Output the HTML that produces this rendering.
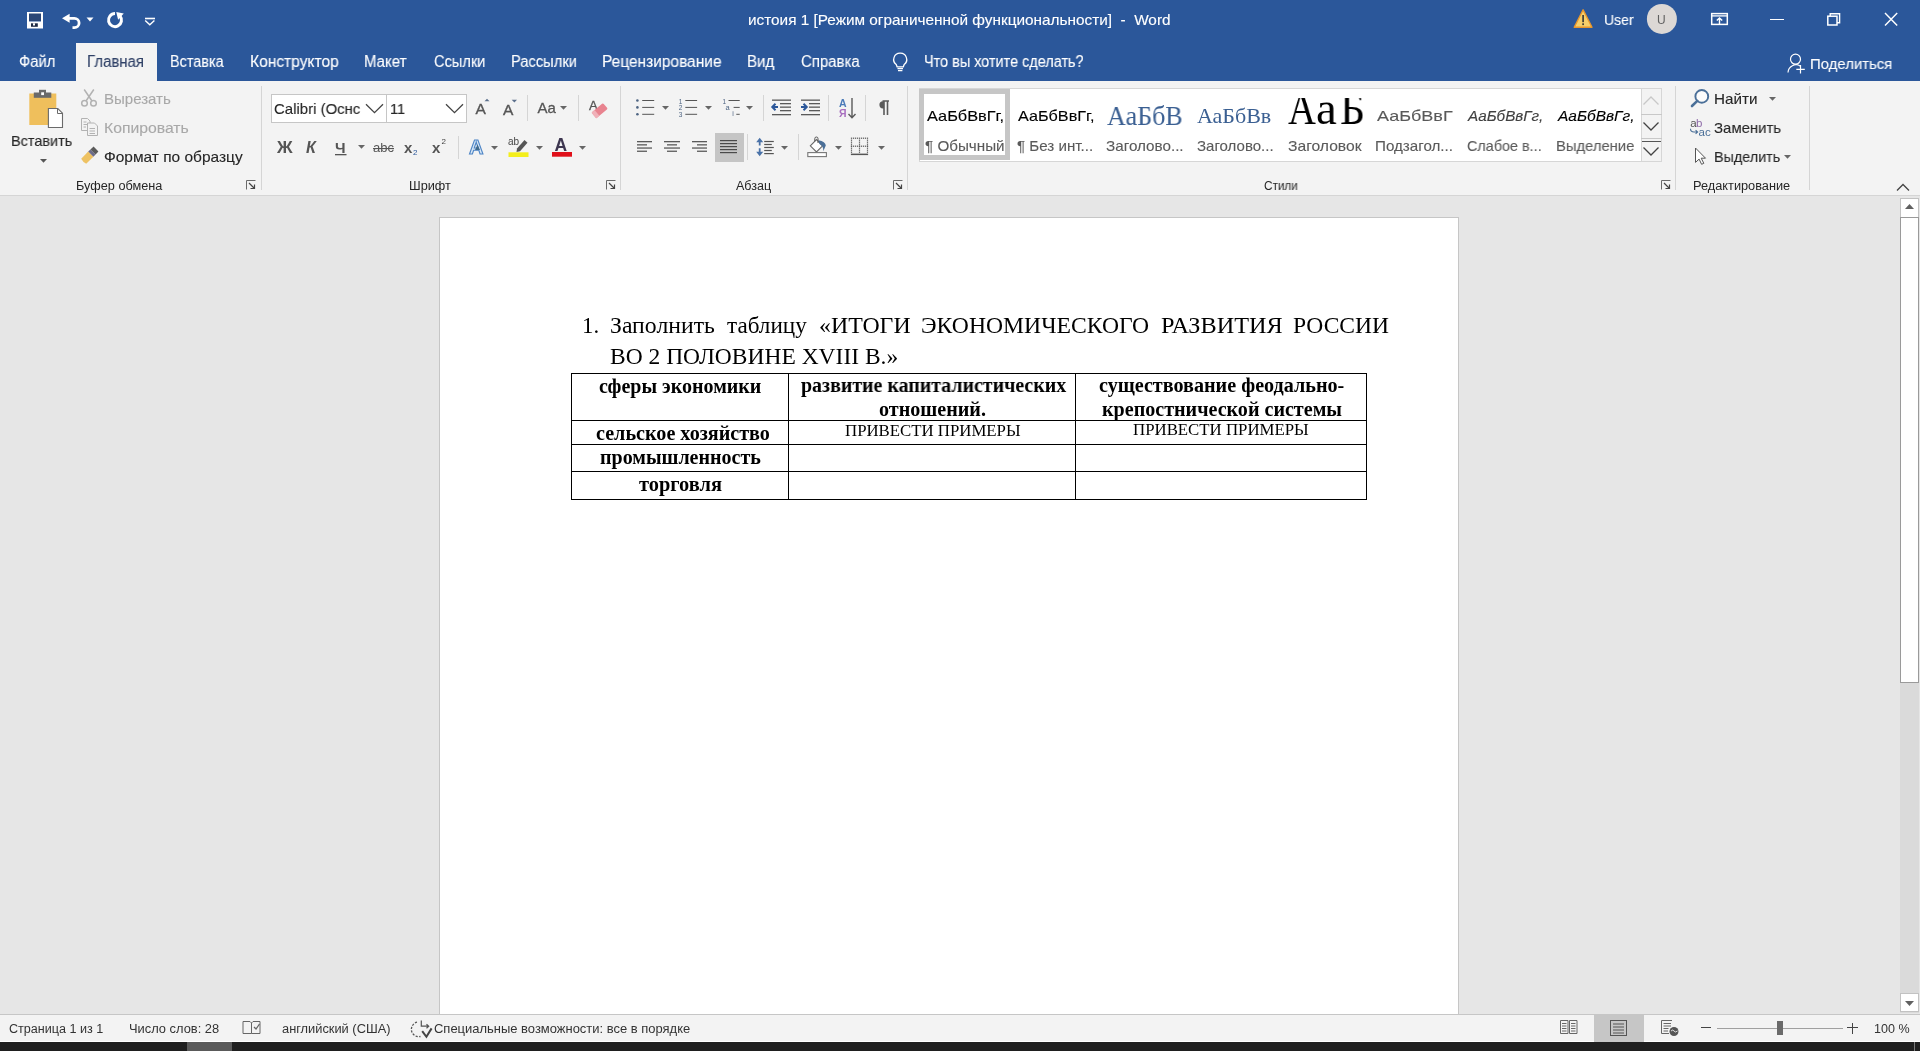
<!DOCTYPE html>
<html><head><meta charset="utf-8"><title>Word</title>
<style>
html,body{margin:0;padding:0}
body{width:1920px;height:1051px;overflow:hidden;position:relative;background:#e6e6e6;font-family:"Liberation Sans",sans-serif}
body>div,body>svg,body>span{position:absolute;display:block}
body>span{line-height:1;white-space:pre;transform-origin:0 0;will-change:transform}
body>svg{will-change:transform;overflow:visible}
</style></head><body><div style="left:0px;top:0px;width:1920px;height:81px;background:#2b579a;"></div><div style="left:76px;top:43px;width:81px;height:38px;background:#f3f3f3;"></div><div style="left:0px;top:81px;width:1920px;height:114px;background:#f3f3f3;"></div><div style="left:0px;top:195px;width:1920px;height:1px;background:#d5d5d5;"></div><div style="left:0px;top:196px;width:1920px;height:818px;background:#e6e6e6;"></div><div style="left:439px;top:217px;width:1020px;height:797px;background:#ffffff;box-sizing:border-box;border:1px solid #c6c6c6;border-bottom:none"></div><div style="left:1900px;top:198px;width:19px;height:815px;background:#dadada;"></div><div style="left:1900px;top:198px;width:19px;height:20px;background:#ffffff;box-sizing:border-box;border:1px solid #c2c2c2"></div><div style="left:1900px;top:217px;width:19px;height:466px;background:#ffffff;box-sizing:border-box;border:1px solid #9a9a9a"></div><div style="left:1900px;top:993px;width:19px;height:19px;background:#ffffff;box-sizing:border-box;border:1px solid #c2c2c2"></div><svg style="left:1904px;top:203px;" width="11" height="7" viewBox="0 0 11 7"><path d="M1 6 L5.5 1 L10 6 Z" fill="#606060"/></svg><svg style="left:1904px;top:1000px;" width="11" height="7" viewBox="0 0 11 7"><path d="M1 1 L5.5 6 L10 1 Z" fill="#606060"/></svg><div style="left:0px;top:1014px;width:1920px;height:1px;background:#c6c6c6;"></div><div style="left:0px;top:1015px;width:1920px;height:27px;background:#f3f3f3;"></div><div style="left:0px;top:1041px;width:1920px;height:1px;background:#ffffff;"></div><div style="left:0px;top:1042px;width:1920px;height:9px;background:#1f1f1f;"></div><div style="left:187px;top:1042px;width:45px;height:9px;background:#5a5a5a;"></div><div style="left:1914px;top:1042px;width:1px;height:9px;background:#7a7a7a;"></div><div style="left:571px;top:373px;width:796px;height:1px;background:#000;height:1.3px"></div><div style="left:571px;top:420px;width:796px;height:1px;background:#000;height:1.3px"></div><div style="left:571px;top:444px;width:796px;height:1px;background:#000;height:1.3px"></div><div style="left:571px;top:471px;width:796px;height:1px;background:#000;height:1.3px"></div><div style="left:571px;top:499px;width:796px;height:1px;background:#000;height:1.3px"></div><div style="left:571px;top:373px;width:1px;height:127px;background:#000;width:1.3px"></div><div style="left:788px;top:373px;width:1px;height:127px;background:#000;width:1.3px"></div><div style="left:1075px;top:373px;width:1px;height:127px;background:#000;width:1.3px"></div><div style="left:1366px;top:373px;width:1px;height:127px;background:#000;width:1.3px"></div><svg style="left:27px;top:12px" width="16" height="16" viewBox="0 0 16 16"><rect x="1" y="1" width="14" height="14.5" fill="none" stroke="#fff" stroke-width="2"/><rect x="2" y="1.5" width="12" height="7.5" fill="#2a4676"/><rect x="1" y="9.5" width="14" height="6" fill="#fff"/><rect x="4" y="11.3" width="6.8" height="3.5" fill="#1e2a44"/><rect x="6" y="11.3" width="2" height="2.2" fill="#fff"/></svg><svg style="left:61px;top:13px" width="21" height="18" viewBox="0 0 21 18"><path d="M1 5.3 L8.6 0.8 L8.6 9.8 Z" fill="#fff"/><path d="M7 5.3 H13.4 A4.7 4.7 0 0 1 13.4 14.7 H11.5" fill="none" stroke="#fff" stroke-width="2.8"/></svg><svg style="left:86px;top:17px" width="8" height="5" viewBox="0 0 8 5"><path d="M0.5 0.5 H7.5 L4 4.5 Z" fill="#fff"/></svg><svg style="left:106px;top:11px" width="19" height="19" viewBox="0 0 19 19"><path d="M9 2.6 A6.5 6.5 0 1 0 13.98 4.92" fill="none" stroke="#fff" stroke-width="3"/><path d="M10.25 0.9 L17.75 2.5 L12.1 8.75 Z" fill="#fff"/></svg><svg style="left:144px;top:16px" width="12" height="10" viewBox="0 0 12 10"><path d="M1 2.5 H11" stroke="#fff" stroke-width="1.6"/><path d="M1.2 4.5 L5.8 8.8 L10.4 4.5" fill="none" stroke="#fff" stroke-width="1.4"/></svg><svg style="left:1573px;top:8px" width="21" height="21" viewBox="0 0 21 21"><path d="M10.1 1.8 L19 19.2 H1.2 Z" fill="#f7cf6a" stroke="#e8962c" stroke-width="1.4" stroke-linejoin="round"/><rect x="9.3" y="7" width="1.6" height="7.2" fill="#333"/><rect x="9.3" y="15.3" width="1.6" height="1.8" fill="#333"/></svg><svg style="left:1646px;top:3px" width="32" height="32" viewBox="0 0 32 32"><circle cx="15.9" cy="15.9" r="15" fill="#dcd8d5"/></svg><svg style="left:1710px;top:12px" width="19" height="14" viewBox="0 0 19 14"><rect x="1.7" y="1.6" width="15.6" height="10.8" fill="none" stroke="#fff" stroke-width="1.5"/><path d="M1.5 3.9 H17.5" stroke="#fff" stroke-width="1.3"/><path d="M9.5 12 V6 M6.8 8.6 L9.5 5.9 L12.2 8.6" fill="none" stroke="#fff" stroke-width="1.4"/></svg><div style="left:1770px;top:18.6px;width:14px;height:1.6px;background:#fff;"></div><svg style="left:1826px;top:12px" width="16" height="14" viewBox="0 0 16 14"><rect x="1.8" y="4.2" width="9.2" height="8.8" fill="none" stroke="#fff" stroke-width="1.5"/><path d="M4.2 4.2 V1.7 H13.6 V10.8 H11" fill="none" stroke="#fff" stroke-width="1.4"/></svg><svg style="left:1883px;top:12px" width="16" height="15" viewBox="0 0 16 15"><path d="M2 1 L14.2 13.5 M14.2 1 L2 13.5" stroke="#fff" stroke-width="1.45"/></svg><svg style="left:1787px;top:53px" width="20" height="21" viewBox="0 0 20 21"><circle cx="8.5" cy="6.2" r="5" fill="none" stroke="#fff" stroke-width="1.2"/><path d="M1 19.5 A8 8 0 0 1 13.5 13.2" fill="none" stroke="#fff" stroke-width="1.2"/><path d="M13.5 12 V20.5 M9.3 16.3 H17.8" stroke="#fff" stroke-width="1.2"/></svg><svg style="left:892px;top:52px" width="17" height="21" viewBox="0 0 17 21"><path d="M8.2 1.2 A6.3 6.3 0 0 1 12.2 12.5 L11.3 14.8 H5.1 L4.2 12.5 A6.3 6.3 0 0 1 8.2 1.2 Z" fill="none" stroke="#fff" stroke-width="1.3"/><path d="M5.5 16.6 H11 M6 18.7 H10.4" stroke="#fff" stroke-width="1.3"/></svg><svg style="left:28px;top:89px" width="36" height="40" viewBox="0 0 36 40"><rect x="1.3" y="4.5" width="27" height="31.5" fill="#efbf5c"/><rect x="5.8" y="3.5" width="17.5" height="5.3" fill="#6a6a6a"/><rect x="11" y="0.8" width="7" height="4" fill="#6a6a6a"/><rect x="13.2" y="3.3" width="2.8" height="2.8" fill="#fff"/><path d="M20.4 19.5 H29.8 L34.5 24.2 V38.5 H20.4 Z" fill="#fff" stroke="#6a6a6a" stroke-width="1.1"/><path d="M29.5 19.5 V24.5 H34.5" fill="none" stroke="#6a6a6a" stroke-width="1"/></svg><svg style="left:40px;top:159px" width="7" height="4" viewBox="0 0 7 4"><path d="M0 0 H7 L3.5 3.8 Z" fill="#555"/></svg><svg style="left:80px;top:88px" width="18" height="20" viewBox="0 0 18 20"><g fill="none" stroke="#b2b2b2" stroke-width="1.5"><circle cx="4.5" cy="15.3" r="2.8"/><circle cx="13.5" cy="15.3" r="2.8"/><path d="M6 13 L13.8 1.5 M12 13 L4.2 1.5"/></g></svg><svg style="left:80px;top:117px" width="19" height="20" viewBox="0 0 19 20"><g fill="#f3f3f3" stroke="#b2b2b2" stroke-width="1"><path d="M1.5 1.5 H7.5 L10 4 V13.5 H1.5 Z"/><path d="M7.5 6 H14.5 L17.5 9 V18.5 H7.5 Z"/><path d="M3.5 5 H6.5 M3.5 7.5 H8 M3.5 10 H6 M9.5 11.5 H15 M9.5 14 H15 M9.5 16.5 H15"/></g></svg><svg style="left:80px;top:146px" width="20" height="19" viewBox="0 0 20 19"><path d="M1.2 12.8 L8.2 5.6 L13.4 10.8 L6.2 17.8 Q3.5 17 1.2 12.8 Z" fill="#eec263"/><path d="M8.2 5.6 L10.4 3.4 L15.6 8.6 L13.4 10.8 Z" fill="#6c6c8a"/><path d="M10.4 3.4 L13.6 0.6 L18.4 5.4 L15.6 8.6 Z" fill="#5a5a5a"/></svg><svg style="left:246px;top:180px" width="10" height="10" viewBox="0 0 10 10"><path d="M0.5 9.5 V0.5 H9.5" fill="none" stroke="#6a6a6a" stroke-width="1"/><path d="M3 3 L8.5 8.5 M4.5 8.5 H8.5 V4.5" fill="none" stroke="#444" stroke-width="1.2"/></svg><div style="left:261px;top:86px;width:1px;height:104px;background:#d5d5d5;"></div><div style="left:271px;top:94px;width:116px;height:29px;background:#fff;box-sizing:border-box;border:1px solid #c6c6c6"></div><div style="left:386px;top:94px;width:81px;height:29px;background:#fff;box-sizing:border-box;border:1px solid #c6c6c6"></div><svg style="left:365px;top:103px" width="19" height="11" viewBox="0 0 19 11"><path d="M1 1.2 L9.5 9.7 L18 1.2" fill="none" stroke="#444" stroke-width="1.3"/></svg><svg style="left:445px;top:103px" width="19" height="11" viewBox="0 0 19 11"><path d="M1 1.2 L9.5 9.7 L18 1.2" fill="none" stroke="#444" stroke-width="1.3"/></svg><svg style="left:475px;top:98px" width="17" height="17" viewBox="0 0 17 17"><text x="0.5" y="15.8" font-family="Liberation Sans" font-size="15.5" fill="#555" stroke="#555" stroke-width="0.35">A</text><path d="M9.5 3.2 L12 0.8 L14.5 3.2 Z" fill="#5b6f8c"/></svg><svg style="left:502px;top:98px" width="17" height="18" viewBox="0 0 17 18"><text x="1" y="17" font-family="Liberation Sans" font-size="15.5" fill="#555" stroke="#555" stroke-width="0.35">A</text><path d="M9.7 1.8 H15 L12.35 4.5 Z" fill="#5b6f8c"/></svg><div style="left:527px;top:95px;width:1px;height:26px;background:#d5d5d5;"></div><svg style="left:537px;top:100px" width="24" height="15" viewBox="0 0 24 15"><text x="0.5" y="13.2" font-family="Liberation Sans" font-size="15" fill="#555" stroke="#555" stroke-width="0.3">Aa</text></svg><svg style="left:560px;top:106px" width="7" height="4" viewBox="0 0 7 4"><path d="M0 0 H7 L3.5 3.8 Z" fill="#666"/></svg><div style="left:578px;top:95px;width:1px;height:26px;background:#d5d5d5;"></div><svg style="left:588px;top:97px" width="21" height="23" viewBox="0 0 21 23"><text x="1" y="12.5" font-family="Liberation Sans" font-size="13" fill="#555" stroke="#555" stroke-width="0.3">A</text><g transform="rotate(-40 11.5 13.5)"><rect x="4" y="10" width="15" height="7.5" rx="1.2" fill="#e8838f"/><rect x="4" y="10" width="4" height="7.5" fill="#f0b0b8"/></g></svg><svg style="left:275px;top:139px" width="20" height="16" viewBox="0 0 20 16"><text x="1" y="14" font-family="Liberation Sans" font-weight="bold" font-size="16" fill="#555" transform="translate(1 0) scale(1.08 1)">Ж</text></svg><svg style="left:305px;top:139px" width="16" height="16" viewBox="0 0 16 16"><text x="1" y="14" font-family="Liberation Sans" font-weight="bold" font-style="italic" font-size="16" fill="#555">К</text></svg><svg style="left:334px;top:139px" width="15" height="17" viewBox="0 0 15 17"><text x="1" y="13.5" font-family="Liberation Sans" font-weight="bold" font-size="15" fill="#555">Ч</text><rect x="1" y="15" width="11.5" height="1.3" fill="#555"/></svg><svg style="left:358px;top:145px" width="7" height="4" viewBox="0 0 7 4"><path d="M0 0 H7 L3.5 3.8 Z" fill="#666"/></svg><svg style="left:372px;top:139px" width="24" height="16" viewBox="0 0 24 16"><text x="1" y="13" font-family="Liberation Sans" font-size="13" fill="#555">abc</text><rect x="1" y="9" width="21" height="1.1" fill="#555"/></svg><svg style="left:403px;top:139px" width="18" height="17" viewBox="0 0 18 17"><text x="1" y="13.5" font-family="Liberation Sans" font-weight="bold" font-size="15" fill="#555">x</text><text x="10" y="16" font-family="Liberation Sans" font-size="8" fill="#2b579a">2</text></svg><svg style="left:431px;top:136px" width="18" height="18" viewBox="0 0 18 18"><text x="1" y="16.5" font-family="Liberation Sans" font-weight="bold" font-size="15" fill="#555">x</text><text x="10.5" y="8" font-family="Liberation Sans" font-size="8" fill="#444">2</text></svg><div style="left:458px;top:136px;width:1px;height:23px;background:#d5d5d5;"></div><svg style="left:468px;top:137px" width="19" height="19" viewBox="0 0 19 19"><text x="1" y="17.2" font-family="Liberation Sans" font-weight="bold" font-size="20" fill="#d9e8f6" stroke="#4f86c6" stroke-width="1.1">A</text><path d="M9.5 7.5 L12 13 H7 Z" fill="#3f6b8f"/></svg><svg style="left:491px;top:146px" width="7" height="4" viewBox="0 0 7 4"><path d="M0 0 H7 L3.5 3.8 Z" fill="#666"/></svg><svg style="left:507px;top:135px" width="24" height="23" viewBox="0 0 24 23"><text x="1" y="10" font-family="Liberation Sans" font-size="10" fill="#444">ab</text><path d="M10 13.5 L17.5 5 L20.5 7.7 L13 16.3 L9.5 17 Z" fill="#555"/><rect x="1.5" y="17.3" width="20" height="4.7" fill="#f3ee1c"/></svg><svg style="left:536px;top:146px" width="7" height="4" viewBox="0 0 7 4"><path d="M0 0 H7 L3.5 3.8 Z" fill="#666"/></svg><svg style="left:551px;top:136px" width="23" height="22" viewBox="0 0 23 22"><text x="3.5" y="15" font-family="Liberation Sans" font-weight="bold" font-size="17.5" fill="#3d3650">A</text><rect x="1" y="16" width="20" height="4.7" fill="#e0101a"/></svg><svg style="left:579px;top:146px" width="7" height="4" viewBox="0 0 7 4"><path d="M0 0 H7 L3.5 3.8 Z" fill="#666"/></svg><svg style="left:606px;top:180px" width="10" height="10" viewBox="0 0 10 10"><path d="M0.5 9.5 V0.5 H9.5" fill="none" stroke="#6a6a6a" stroke-width="1"/><path d="M3 3 L8.5 8.5 M4.5 8.5 H8.5 V4.5" fill="none" stroke="#444" stroke-width="1.2"/></svg><div style="left:620px;top:86px;width:1px;height:104px;background:#d5d5d5;"></div><svg style="left:635px;top:98px" width="21" height="19" viewBox="0 0 21 19"><g fill="#4e6482"><circle cx="2.4" cy="2.5" r="1.3"/><circle cx="2.4" cy="9.4" r="1.3"/><circle cx="2.4" cy="16.3" r="1.3"/></g><g fill="#555"><rect x="7.2" y="2" width="12" height="1"/><rect x="7.2" y="8.9" width="12" height="1"/><rect x="7.2" y="15.8" width="12" height="1"/></g></svg><svg style="left:662px;top:106px" width="7" height="4" viewBox="0 0 7 4"><path d="M0 0 H7 L3.5 3.8 Z" fill="#666"/></svg><svg style="left:678px;top:98px" width="21" height="19" viewBox="0 0 21 19"><g font-family="Liberation Sans" font-size="6.5" fill="#4e6482"><text x="0.8" y="5.6">1</text><text x="0.8" y="12.4">2</text><text x="0.8" y="19.2">3</text></g><g fill="#555"><rect x="7.3" y="2" width="11.8" height="1"/><rect x="7.3" y="8.9" width="11.8" height="1"/><rect x="7.3" y="15.8" width="11.8" height="1"/></g></svg><svg style="left:705px;top:106px" width="7" height="4" viewBox="0 0 7 4"><path d="M0 0 H7 L3.5 3.8 Z" fill="#666"/></svg><svg style="left:720px;top:98px" width="22" height="19" viewBox="0 0 22 19"><g font-family="Liberation Sans" fill="#4e6482"><text x="2.6" y="5.6" font-size="6.5">1</text><text x="5.6" y="12" font-size="7.5">a</text><text x="12.2" y="17.8" font-size="7">i</text></g><g fill="#555"><rect x="8.5" y="2" width="11.2" height="1"/><rect x="13.6" y="8.9" width="6.1" height="1"/><rect x="16.3" y="15.8" width="3.4" height="1"/></g></svg><svg style="left:746px;top:106px" width="7" height="4" viewBox="0 0 7 4"><path d="M0 0 H7 L3.5 3.8 Z" fill="#666"/></svg><div style="left:763px;top:95px;width:1px;height:26px;background:#d5d5d5;"></div><svg style="left:771px;top:99px" width="21" height="18" viewBox="0 0 21 18"><g fill="#5a5a5a"><rect x="1" y="0.5" width="19" height="1.3"/><rect x="9" y="4" width="11" height="1.3"/><rect x="9" y="7.5" width="11" height="1.3"/><rect x="9" y="11" width="11" height="1.3"/><rect x="1" y="15" width="19" height="1.3"/></g><path d="M7 8 H1.5 M4.5 4.8 L1.3 8 L4.5 11.2" fill="none" stroke="#2b579a" stroke-width="2"/></svg><svg style="left:800px;top:99px" width="21" height="18" viewBox="0 0 21 18"><g fill="#5a5a5a"><rect x="1" y="0.5" width="19" height="1.3"/><rect x="9" y="4" width="11" height="1.3"/><rect x="9" y="7.5" width="11" height="1.3"/><rect x="9" y="11" width="11" height="1.3"/><rect x="1" y="15" width="19" height="1.3"/></g><path d="M1 8 H6.5 M3.5 4.8 L6.7 8 L3.5 11.2" fill="none" stroke="#2b579a" stroke-width="2"/></svg><div style="left:828px;top:95px;width:1px;height:26px;background:#d5d5d5;"></div><svg style="left:839px;top:97px" width="19" height="22" viewBox="0 0 19 22"><text x="0" y="9.5" font-family="Liberation Sans" font-weight="bold" font-size="10.5" fill="#4a7ab8">A</text><text x="0" y="20" font-family="Liberation Sans" font-weight="bold" font-size="10.5" fill="#a86fbf">Я</text><path d="M13 1 V20.5 M9.5 17 L13 20.7 L16.5 17" fill="none" stroke="#5a5a5a" stroke-width="1.4"/></svg><div style="left:865px;top:95px;width:1px;height:26px;background:#d5d5d5;"></div><svg style="left:876px;top:100px" width="15" height="16" viewBox="0 0 15 16"><path d="M6.5 1 H13 M8 1 V15 M11.5 1 V15" stroke="#5a5a5a" stroke-width="1.6" fill="none"/><path d="M7 1.2 A3.6 3.6 0 0 0 7 8.4 H8 V1.2 Z" fill="#5a5a5a"/></svg><svg style="left:637px;top:141px" width="17" height="12" viewBox="0 0 17 12"><rect x="0" y="0.0" width="15" height="1.3" fill="#5a5a5a"/><rect x="0" y="3.2" width="10" height="1.3" fill="#5a5a5a"/><rect x="0" y="6.4" width="15" height="1.3" fill="#5a5a5a"/><rect x="0" y="9.600000000000001" width="10" height="1.3" fill="#5a5a5a"/></svg><svg style="left:664px;top:141px" width="17" height="12" viewBox="0 0 17 12"><rect x="0" y="0.0" width="16" height="1.3" fill="#5a5a5a"/><rect x="3" y="3.2" width="10" height="1.3" fill="#5a5a5a"/><rect x="0" y="6.4" width="16" height="1.3" fill="#5a5a5a"/><rect x="3" y="9.600000000000001" width="10" height="1.3" fill="#5a5a5a"/></svg><svg style="left:692px;top:141px" width="17" height="12" viewBox="0 0 17 12"><rect x="0" y="0.0" width="15" height="1.3" fill="#5a5a5a"/><rect x="5" y="3.2" width="10" height="1.3" fill="#5a5a5a"/><rect x="0" y="6.4" width="15" height="1.3" fill="#5a5a5a"/><rect x="5" y="9.600000000000001" width="10" height="1.3" fill="#5a5a5a"/></svg><div style="left:715px;top:133px;width:29px;height:29px;background:#c5c5c5;"></div><svg style="left:720px;top:140px" width="18" height="14" viewBox="0 0 18 14"><rect x="0" y="0.0" width="17" height="1.2" fill="#4a4a4a"/><rect x="0" y="3.0" width="17" height="1.2" fill="#4a4a4a"/><rect x="0" y="6.0" width="17" height="1.2" fill="#4a4a4a"/><rect x="0" y="9.0" width="17" height="1.2" fill="#4a4a4a"/><rect x="0" y="12.0" width="17" height="1.2" fill="#4a4a4a"/></svg><div style="left:747px;top:134px;width:1px;height:26px;background:#d5d5d5;"></div><svg style="left:755px;top:137px" width="21" height="20" viewBox="0 0 21 20"><path d="M4.7 3 V8.6 M4.7 11.2 V17" stroke="#4a72a8" stroke-width="1.8"/><path d="M1.2 5.3 L4.7 0.8 L8.2 5.3 Z M1.2 14.7 L4.7 19.2 L8.2 14.7 Z" fill="#4a72a8"/><g fill="#555"><rect x="9.2" y="3.9" width="9.6" height="1.2"/><rect x="9.2" y="6.9" width="7.6" height="1.2"/><rect x="9.2" y="9.9" width="9.6" height="1.2"/><rect x="9.2" y="12.9" width="7.6" height="1.2"/><rect x="9.2" y="16" width="9.6" height="1.2"/></g></svg><svg style="left:781px;top:146px" width="7" height="4" viewBox="0 0 7 4"><path d="M0 0 H7 L3.5 3.8 Z" fill="#666"/></svg><div style="left:798px;top:134px;width:1px;height:26px;background:#d5d5d5;"></div><svg style="left:806px;top:136px" width="22" height="21" viewBox="0 0 22 21"><path d="M4.3 9.8 L10.5 3.6 L16.6 9.8 L10.5 16 Z" fill="#fff" stroke="#666" stroke-width="1.1"/><path d="M8.8 5.3 V2.6 A1.6 1.6 0 0 1 12 2.6 V7" fill="none" stroke="#555" stroke-width="1"/><path d="M12.5 4.2 Q19.5 5.5 19.8 9.5 L17.3 15.2 Q17.6 10 13.5 8 Z" fill="#4a6f98"/><rect x="1.8" y="16.6" width="18.6" height="4" fill="#fff" stroke="#777" stroke-width="1.1"/></svg><svg style="left:835px;top:146px" width="7" height="4" viewBox="0 0 7 4"><path d="M0 0 H7 L3.5 3.8 Z" fill="#666"/></svg><svg style="left:850px;top:137px" width="19" height="19" viewBox="0 0 19 19"><g fill="#555"><rect x="0.9" y="0.6" width="1.2" height="1.2"/><rect x="0.9" y="8.6" width="1.2" height="1.2"/><rect x="2.9" y="0.6" width="1.2" height="1.2"/><rect x="2.9" y="8.6" width="1.2" height="1.2"/><rect x="4.9" y="0.6" width="1.2" height="1.2"/><rect x="4.9" y="8.6" width="1.2" height="1.2"/><rect x="6.9" y="0.6" width="1.2" height="1.2"/><rect x="6.9" y="8.6" width="1.2" height="1.2"/><rect x="8.9" y="0.6" width="1.2" height="1.2"/><rect x="8.9" y="8.6" width="1.2" height="1.2"/><rect x="10.9" y="0.6" width="1.2" height="1.2"/><rect x="10.9" y="8.6" width="1.2" height="1.2"/><rect x="12.9" y="0.6" width="1.2" height="1.2"/><rect x="12.9" y="8.6" width="1.2" height="1.2"/><rect x="14.9" y="0.6" width="1.2" height="1.2"/><rect x="14.9" y="8.6" width="1.2" height="1.2"/><rect x="16.9" y="0.6" width="1.2" height="1.2"/><rect x="16.9" y="8.6" width="1.2" height="1.2"/><rect x="0.9" y="2.6" width="1.2" height="1.2"/><rect x="8.9" y="2.6" width="1.2" height="1.2"/><rect x="16.9" y="2.6" width="1.2" height="1.2"/><rect x="0.9" y="4.6" width="1.2" height="1.2"/><rect x="8.9" y="4.6" width="1.2" height="1.2"/><rect x="16.9" y="4.6" width="1.2" height="1.2"/><rect x="0.9" y="6.6" width="1.2" height="1.2"/><rect x="8.9" y="6.6" width="1.2" height="1.2"/><rect x="16.9" y="6.6" width="1.2" height="1.2"/><rect x="0.9" y="8.6" width="1.2" height="1.2"/><rect x="8.9" y="8.6" width="1.2" height="1.2"/><rect x="16.9" y="8.6" width="1.2" height="1.2"/><rect x="0.9" y="10.6" width="1.2" height="1.2"/><rect x="8.9" y="10.6" width="1.2" height="1.2"/><rect x="16.9" y="10.6" width="1.2" height="1.2"/><rect x="0.9" y="12.6" width="1.2" height="1.2"/><rect x="8.9" y="12.6" width="1.2" height="1.2"/><rect x="16.9" y="12.6" width="1.2" height="1.2"/><rect x="0.9" y="14.6" width="1.2" height="1.2"/><rect x="8.9" y="14.6" width="1.2" height="1.2"/><rect x="16.9" y="14.6" width="1.2" height="1.2"/></g><rect x="0.9" y="16.6" width="17.2" height="1.5" fill="#555"/></svg><svg style="left:878px;top:146px" width="7" height="4" viewBox="0 0 7 4"><path d="M0 0 H7 L3.5 3.8 Z" fill="#666"/></svg><svg style="left:893px;top:180px" width="10" height="10" viewBox="0 0 10 10"><path d="M0.5 9.5 V0.5 H9.5" fill="none" stroke="#6a6a6a" stroke-width="1"/><path d="M3 3 L8.5 8.5 M4.5 8.5 H8.5 V4.5" fill="none" stroke="#444" stroke-width="1.2"/></svg><div style="left:907px;top:86px;width:1px;height:104px;background:#d5d5d5;"></div><div style="left:919px;top:88px;width:743px;height:74px;background:#fff;box-sizing:border-box;border:1px solid #d6d6d6"></div><div style="left:919px;top:89px;width:91px;height:71px;background:transparent;box-sizing:border-box;border:5px solid #c6c6c6"></div><div style="left:1641px;top:88px;width:21px;height:74px;background:#f3f3f3;box-sizing:border-box;border:1px solid #d6d6d6"></div><div style="left:1641px;top:113.5px;width:21px;height:1.5px;background:#c8c8c8;"></div><div style="left:1641px;top:137.5px;width:21px;height:1.5px;background:#c8c8c8;"></div><div style="left:1642px;top:140.5px;width:19px;height:1.6px;background:#555;"></div><svg style="left:1642px;top:95px" width="18" height="11" viewBox="0 0 18 11"><path d="M1.5 9.5 L9 2 L16.5 9.5" fill="none" stroke="#c8c8c8" stroke-width="1.3"/></svg><svg style="left:1642px;top:121px" width="18" height="11" viewBox="0 0 18 11"><path d="M1.5 1.5 L9 9 L16.5 1.5" fill="none" stroke="#444" stroke-width="1.3"/></svg><svg style="left:1642px;top:146px" width="18" height="11" viewBox="0 0 18 11"><path d="M1.5 1.5 L9 9 L16.5 1.5" fill="none" stroke="#444" stroke-width="1.3"/></svg><svg style="left:1661px;top:180px" width="10" height="10" viewBox="0 0 10 10"><path d="M0.5 9.5 V0.5 H9.5" fill="none" stroke="#6a6a6a" stroke-width="1"/><path d="M3 3 L8.5 8.5 M4.5 8.5 H8.5 V4.5" fill="none" stroke="#444" stroke-width="1.2"/></svg><div style="left:1675px;top:86px;width:1px;height:104px;background:#d5d5d5;"></div><svg style="left:1690px;top:88px" width="20" height="20" viewBox="0 0 20 20"><circle cx="11.8" cy="8.4" r="6.4" fill="#fbfbfb" stroke="#4a6f98" stroke-width="1.9"/><path d="M7.3 12.9 L2 18" stroke="#4a6f98" stroke-width="2.6" stroke-linecap="round"/></svg><svg style="left:1769px;top:97px" width="7" height="4" viewBox="0 0 7 4"><path d="M0 0 H7 L3.5 3.8 Z" fill="#666"/></svg><svg style="left:1689px;top:117px" width="23" height="21" viewBox="0 0 23 21"><text x="1.2" y="9.6" font-family="Liberation Sans" font-size="11.5" fill="#555">a</text><text x="7" y="9.6" font-family="Liberation Sans" font-size="11.5" fill="#8e6aa8">b</text><text x="9.6" y="18.6" font-family="Liberation Sans" font-size="11.5" fill="#4a6f98">ac</text><path d="M1.5 11.8 Q1.5 15 5 15 H8.5 M6.6 13.2 L8.6 15 L6.6 16.8" fill="none" stroke="#4a6f98" stroke-width="1.1"/></svg><svg style="left:1694px;top:147px" width="13" height="19" viewBox="0 0 13 19"><path d="M1.5 1 L11.5 11.2 H7.2 L9.8 16.3 L7.6 17.3 L5.1 12.1 L1.5 15.4 Z" fill="#fff" stroke="#555" stroke-width="1"/></svg><svg style="left:1784px;top:155px" width="7" height="4" viewBox="0 0 7 4"><path d="M0 0 H7 L3.5 3.8 Z" fill="#666"/></svg><div style="left:1809px;top:86px;width:1px;height:104px;background:#d5d5d5;"></div><svg style="left:1896px;top:183px" width="14" height="9" viewBox="0 0 14 9"><path d="M1 7.5 L7 1.5 L13 7.5" fill="none" stroke="#444" stroke-width="1.3"/></svg><svg style="left:242px;top:1020px" width="20" height="15" viewBox="0 0 20 15"><path d="M1 1.5 H8 L9.5 3 V13.5 H1 Z M9.5 3 L11 1.5 H18 V13.5 H9.5" fill="none" stroke="#666" stroke-width="1"/><path d="M12 7 L14 9 L17.5 4" fill="none" stroke="#666" stroke-width="1.3"/></svg><svg style="left:412px;top:1019px" width="22" height="19" viewBox="0 0 22 19"><path d="M5 3.2 A7 7 0 0 0 8.5 17.5" fill="none" stroke="#555" stroke-width="1.3" stroke-dasharray="2.2 1.4"/><path d="M9.3 1.5 V7.2 H16.5 M14.5 5.2 L16.7 7.2 L14.5 9.2" fill="none" stroke="#555" stroke-width="1.2"/><path d="M10.2 12.2 L14.4 17.8 L19.6 9.4" fill="none" stroke="#444" stroke-width="2"/></svg><svg style="left:1559px;top:1019px" width="20" height="17" viewBox="0 0 20 17"><g fill="none" stroke="#666" stroke-width="1"><path d="M1.5 1.5 H9 V14.5 H1.5 Z M10.5 1.5 H18 V14.5 H10.5 Z"/><path d="M3 4.5 H7.5 M3 7 H7.5 M3 9.5 H7.5 M3 12 H7.5 M12 4.5 H16.5 M12 7 H16.5 M12 9.5 H16.5 M12 12 H16.5"/></g></svg><div style="left:1594px;top:1014px;width:50px;height:28px;background:#c6c6c6;"></div><svg style="left:1609px;top:1019px" width="19" height="18" viewBox="0 0 19 18"><g fill="none" stroke="#555" stroke-width="1"><rect x="1.5" y="1.5" width="16" height="15"/><path d="M4 5 H15 M4 8 H15 M4 11 H15 M4 14 H15"/></g></svg><svg style="left:1660px;top:1019px" width="20" height="18" viewBox="0 0 20 18"><g fill="none" stroke="#666" stroke-width="1"><path d="M12 1.5 H1.5 V14.5 H9"/><path d="M3.5 4.5 H11 M3.5 7 H11 M3.5 9.5 H8.5 M3.5 12 H8"/></g><circle cx="14" cy="12.5" r="4.5" fill="#555"/><path d="M11 12 Q13 10 14 12 T17.5 12" stroke="#fff" stroke-width="0.8" fill="none"/></svg><div style="left:1701px;top:1027px;width:10px;height:1.3px;background:#444;"></div><div style="left:1717px;top:1028px;width:126px;height:1px;background:#a0a0a0;"></div><div style="left:1777px;top:1021px;width:6px;height:14px;background:#6a6a6a;"></div><div style="left:1847px;top:1027px;width:11px;height:1.3px;background:#444;"></div><div style="left:1851.8px;top:1022.5px;width:1.3px;height:11px;background:#444;"></div><span style="left:747.57px;top:12.00px;font-size:15px;font-family:'Liberation Sans', sans-serif;font-weight:400;font-style:normal;color:#ffffff;transform:scaleX(1.0224);-webkit-text-stroke:0.12px #ffffff">истоия 1 [Режим ограниченной функциональности]  -  Word</span><span style="left:1604.06px;top:11.75px;font-size:15px;font-family:'Liberation Sans', sans-serif;font-weight:400;font-style:normal;color:#ffffff;transform:scaleX(0.9355);-webkit-text-stroke:0.12px #ffffff">User</span><span style="left:1657.21px;top:13.61px;font-size:12px;font-family:'Liberation Sans', sans-serif;font-weight:400;font-style:normal;color:#5f5f5f;transform:scaleX(0.9857)">U</span><span style="left:19.22px;top:53.81px;font-size:15.8px;font-family:'Liberation Sans', sans-serif;font-weight:400;font-style:normal;color:#ffffff;transform:scaleX(0.9378);-webkit-text-stroke:0.12px #ffffff">Файл</span><span style="left:87.05px;top:53.81px;font-size:15.8px;font-family:'Liberation Sans', sans-serif;font-weight:400;font-style:normal;color:#2f4066;transform:scaleX(0.9483);-webkit-text-stroke:0.12px #2f4066">Главная</span><span style="left:169.56px;top:53.81px;font-size:15.8px;font-family:'Liberation Sans', sans-serif;font-weight:400;font-style:normal;color:#ffffff;transform:scaleX(0.9123);-webkit-text-stroke:0.12px #ffffff">Вставка</span><span style="left:249.62px;top:53.81px;font-size:15.8px;font-family:'Liberation Sans', sans-serif;font-weight:400;font-style:normal;color:#ffffff;transform:scaleX(0.9852);-webkit-text-stroke:0.12px #ffffff">Конструктор</span><span style="left:364.05px;top:53.81px;font-size:15.8px;font-family:'Liberation Sans', sans-serif;font-weight:400;font-style:normal;color:#ffffff;transform:scaleX(0.9500);-webkit-text-stroke:0.12px #ffffff">Макет</span><span style="left:433.65px;top:53.81px;font-size:15.8px;font-family:'Liberation Sans', sans-serif;font-weight:400;font-style:normal;color:#ffffff;transform:scaleX(0.9222);-webkit-text-stroke:0.12px #ffffff">Ссылки</span><span style="left:511.07px;top:53.81px;font-size:15.8px;font-family:'Liberation Sans', sans-serif;font-weight:400;font-style:normal;color:#ffffff;transform:scaleX(0.9304);-webkit-text-stroke:0.12px #ffffff">Рассылки</span><span style="left:602.44px;top:53.81px;font-size:15.8px;font-family:'Liberation Sans', sans-serif;font-weight:400;font-style:normal;color:#ffffff;transform:scaleX(0.9800);-webkit-text-stroke:0.12px #ffffff">Рецензирование</span><span style="left:747.48px;top:53.81px;font-size:15.8px;font-family:'Liberation Sans', sans-serif;font-weight:400;font-style:normal;color:#ffffff;transform:scaleX(0.9556);-webkit-text-stroke:0.12px #ffffff">Вид</span><span style="left:800.66px;top:53.81px;font-size:15.8px;font-family:'Liberation Sans', sans-serif;font-weight:400;font-style:normal;color:#ffffff;transform:scaleX(0.9459);-webkit-text-stroke:0.12px #ffffff">Справка</span><span style="left:923.51px;top:53.81px;font-size:15.8px;font-family:'Liberation Sans', sans-serif;font-weight:400;font-style:normal;color:#ffffff;transform:scaleX(0.9139);-webkit-text-stroke:0.12px #ffffff">Что вы хотите сделать?</span><span style="left:1809.61px;top:55.80px;font-size:15px;font-family:'Liberation Sans', sans-serif;font-weight:400;font-style:normal;color:#ffffff;transform:scaleX(0.9926);-webkit-text-stroke:0.12px #ffffff">Поделиться</span><span style="left:11.45px;top:133.11px;font-size:15px;font-family:'Liberation Sans', sans-serif;font-weight:400;font-style:normal;color:#262626;transform:scaleX(0.9629);-webkit-text-stroke:0.12px #262626">Вставить</span><span style="left:103.61px;top:90.91px;font-size:15px;font-family:'Liberation Sans', sans-serif;font-weight:400;font-style:normal;color:#a8a8a8;transform:scaleX(0.9954);-webkit-text-stroke:0.12px #a8a8a8">Вырезать</span><span style="left:103.54px;top:119.71px;font-size:15px;font-family:'Liberation Sans', sans-serif;font-weight:400;font-style:normal;color:#a8a8a8;transform:scaleX(1.0494);-webkit-text-stroke:0.12px #a8a8a8">Копировать</span><span style="left:103.56px;top:148.80px;font-size:15px;font-family:'Liberation Sans', sans-serif;font-weight:400;font-style:normal;color:#262626;transform:scaleX(1.0308);-webkit-text-stroke:0.12px #262626">Формат по образцу</span><span style="left:76.18px;top:179.70px;font-size:12px;font-family:'Liberation Sans', sans-serif;font-weight:400;font-style:normal;color:#262626;transform:scaleX(1.0593)">Буфер обмена</span><span style="left:274.00px;top:100.71px;font-size:15px;font-family:'Liberation Sans', sans-serif;font-weight:400;font-style:normal;color:#262626;transform:scaleX(0.9965);-webkit-text-stroke:0.12px #262626">Calibri (Оснс</span><span style="left:390.04px;top:100.71px;font-size:15px;font-family:'Liberation Sans', sans-serif;font-weight:400;font-style:normal;color:#262626;transform:scaleX(0.9643);-webkit-text-stroke:0.12px #262626">11</span><span style="left:408.76px;top:179.50px;font-size:12px;font-family:'Liberation Sans', sans-serif;font-weight:400;font-style:normal;color:#262626;transform:scaleX(1.0615)">Шрифт</span><span style="left:735.61px;top:179.81px;font-size:12px;font-family:'Liberation Sans', sans-serif;font-weight:400;font-style:normal;color:#262626;transform:scaleX(1.0441)">Абзац</span><span style="left:1264.02px;top:179.81px;font-size:12px;font-family:'Liberation Sans', sans-serif;font-weight:400;font-style:normal;color:#262626;transform:scaleX(0.9788)">Стили</span><span style="left:1692.76px;top:180.00px;font-size:12px;font-family:'Liberation Sans', sans-serif;font-weight:400;font-style:normal;color:#262626;transform:scaleX(1.0633)">Редактирование</span><span style="left:926.96px;top:108.11px;font-size:15px;font-family:'Liberation Sans', sans-serif;font-weight:400;font-style:normal;color:#000000;transform:scaleX(1.0884);-webkit-text-stroke:0.12px #000000">АаБбВвГг,</span><span style="left:924.59px;top:137.50px;font-size:15px;font-family:'Liberation Sans', sans-serif;font-weight:400;font-style:normal;color:#5a5a5a;transform:scaleX(1.0130);-webkit-text-stroke:0.12px #5a5a5a">¶ Обычный</span><span style="left:1017.79px;top:108.11px;font-size:15px;font-family:'Liberation Sans', sans-serif;font-weight:400;font-style:normal;color:#000000;transform:scaleX(1.0783);-webkit-text-stroke:0.12px #000000">АаБбВвГг,</span><span style="left:1016.99px;top:137.50px;font-size:15px;font-family:'Liberation Sans', sans-serif;font-weight:400;font-style:normal;color:#5a5a5a;transform:scaleX(1.0082);-webkit-text-stroke:0.12px #5a5a5a">¶ Без инт...</span><span style="left:1107.21px;top:103.00px;font-size:27px;font-family:'Liberation Serif', serif;font-weight:400;font-style:normal;color:#3a5f92;transform:scaleX(0.9662)">АаБбВ</span><span style="left:1105.78px;top:137.50px;font-size:15px;font-family:'Liberation Sans', sans-serif;font-weight:400;font-style:normal;color:#5a5a5a;transform:scaleX(1.0149);-webkit-text-stroke:0.12px #5a5a5a">Заголово...</span><span style="left:1197.40px;top:104.81px;font-size:22px;font-family:'Liberation Serif', serif;font-weight:400;font-style:normal;color:#3a5f92;transform:scaleX(0.9986)">АаБбВв</span><span style="left:1197.00px;top:137.50px;font-size:15px;font-family:'Liberation Sans', sans-serif;font-weight:400;font-style:normal;color:#5a5a5a;transform:scaleX(1.0013);-webkit-text-stroke:0.12px #5a5a5a">Заголово...</span><div style="left:1280px;top:98.3px;width:84px;height:40px;overflow:hidden"><span style="position:absolute;display:block;line-height:1;white-space:pre;transform-origin:0 0;will-change:transform;left:8.00px;top:-13.60px;font-size:47px;font-family:'Liberation Serif', serif;font-weight:400;color:#000000;transform:scaleX(0.8206)">А</span></div><div style="left:1280px;top:98.3px;width:84px;height:40px;overflow:hidden"><span style="position:absolute;display:block;line-height:1;white-space:pre;transform-origin:0 0;will-change:transform;left:36.42px;top:-13.60px;font-size:47px;font-family:'Liberation Serif', serif;font-weight:400;color:#000000;transform:scaleX(0.9895)">а</span></div><div style="left:1280px;top:98.3px;width:83.2px;height:40px;overflow:hidden"><span style="position:absolute;display:block;line-height:1;white-space:pre;transform-origin:0 0;will-change:transform;left:59.91px;top:-13.60px;font-size:47px;font-family:'Liberation Serif', serif;font-weight:400;color:#000000;transform:scaleX(0.9304)">Б</span></div><span style="left:1288.18px;top:137.50px;font-size:15px;font-family:'Liberation Sans', sans-serif;font-weight:400;font-style:normal;color:#5a5a5a;transform:scaleX(1.0429);-webkit-text-stroke:0.12px #5a5a5a">Заголовок</span><span style="left:1377.12px;top:108.11px;font-size:15px;font-family:'Liberation Sans', sans-serif;font-weight:400;font-style:normal;color:#595959;transform:scaleX(1.2000);-webkit-text-stroke:0.12px #595959">АаБбВвГ</span><span style="left:1375.39px;top:137.50px;font-size:15px;font-family:'Liberation Sans', sans-serif;font-weight:400;font-style:normal;color:#5a5a5a;transform:scaleX(1.0107);-webkit-text-stroke:0.12px #5a5a5a">Подзагол...</span><span style="left:1468.40px;top:107.80px;font-size:15px;font-family:'Liberation Sans', sans-serif;font-weight:400;font-style:italic;color:#404040;transform:scaleX(1.0164);-webkit-text-stroke:0.12px #404040">АаБбВвГг,</span><span style="left:1467.43px;top:137.71px;font-size:15px;font-family:'Liberation Sans', sans-serif;font-weight:400;font-style:normal;color:#5a5a5a;transform:scaleX(0.9592);-webkit-text-stroke:0.12px #5a5a5a">Слабое в...</span><span style="left:1558.00px;top:107.80px;font-size:15px;font-family:'Liberation Sans', sans-serif;font-weight:400;font-style:italic;color:#000000;transform:scaleX(1.0319);-webkit-text-stroke:0.12px #000000">АаБбВвГг,</span><span style="left:1555.62px;top:137.71px;font-size:15px;font-family:'Liberation Sans', sans-serif;font-weight:400;font-style:normal;color:#5a5a5a;transform:scaleX(0.9846);-webkit-text-stroke:0.12px #5a5a5a">Выделение</span><span style="left:1713.99px;top:90.91px;font-size:15px;font-family:'Liberation Sans', sans-serif;font-weight:400;font-style:normal;color:#262626;transform:scaleX(1.0146);-webkit-text-stroke:0.12px #262626">Найти</span><span style="left:1713.60px;top:119.80px;font-size:15px;font-family:'Liberation Sans', sans-serif;font-weight:400;font-style:normal;color:#262626;transform:scaleX(0.9955);-webkit-text-stroke:0.12px #262626">Заменить</span><span style="left:1714.04px;top:148.71px;font-size:15px;font-family:'Liberation Sans', sans-serif;font-weight:400;font-style:normal;color:#262626;transform:scaleX(0.9559);-webkit-text-stroke:0.12px #262626">Выделить</span><span style="left:581.57px;top:315.00px;font-size:22.5px;font-family:'Liberation Serif', serif;font-weight:400;font-style:normal;color:#000000;transform:scaleX(1.0154)">1.</span><span style="left:609.53px;top:315.00px;font-size:22.5px;font-family:'Liberation Serif', serif;font-weight:400;font-style:normal;color:#000000;transform:scaleX(1.0551)">Заполнить</span><span style="left:727.00px;top:315.00px;font-size:22.5px;font-family:'Liberation Serif', serif;font-weight:400;font-style:normal;color:#000000;transform:scaleX(1.0286)">таблицу</span><span style="left:818.70px;top:315.00px;font-size:22.5px;font-family:'Liberation Serif', serif;font-weight:400;font-style:normal;color:#000000;transform:scaleX(1.0595)">«ИТОГИ</span><span style="left:920.74px;top:315.00px;font-size:22.5px;font-family:'Liberation Serif', serif;font-weight:400;font-style:normal;color:#000000;transform:scaleX(1.0512)">ЭКОНОМИЧЕСКОГО</span><span style="left:1160.96px;top:315.00px;font-size:22.5px;font-family:'Liberation Serif', serif;font-weight:400;font-style:normal;color:#000000;transform:scaleX(1.0784)">РАЗВИТИЯ</span><span style="left:1292.95px;top:315.00px;font-size:22.5px;font-family:'Liberation Serif', serif;font-weight:400;font-style:normal;color:#000000;transform:scaleX(1.0456)">РОССИИ</span><span style="left:609.55px;top:345.80px;font-size:22.5px;font-family:'Liberation Serif', serif;font-weight:400;font-style:normal;color:#000000;transform:scaleX(1.0442)">ВО 2 ПОЛОВИНЕ XVIII В.»</span><span style="left:599.40px;top:376.00px;font-size:20px;font-family:'Liberation Serif', serif;font-weight:700;font-style:normal;color:#000000;transform:scaleX(1.0006)">сферы экономики</span><span style="left:800.60px;top:375.30px;font-size:20px;font-family:'Liberation Serif', serif;font-weight:700;font-style:normal;color:#000000;transform:scaleX(0.9959)">развитие капиталистических</span><span style="left:879.00px;top:398.80px;font-size:20px;font-family:'Liberation Serif', serif;font-weight:700;font-style:normal;color:#000000;transform:scaleX(1.0048)">отношений.</span><span style="left:1098.79px;top:375.41px;font-size:20px;font-family:'Liberation Serif', serif;font-weight:700;font-style:normal;color:#000000;transform:scaleX(1.0070)">существование феодально-</span><span style="left:1101.60px;top:398.91px;font-size:20px;font-family:'Liberation Serif', serif;font-weight:700;font-style:normal;color:#000000;transform:scaleX(1.0038)">крепостнической системы</span><span style="left:595.99px;top:422.61px;font-size:20px;font-family:'Liberation Serif', serif;font-weight:700;font-style:normal;color:#000000;transform:scaleX(1.0064)">сельское хозяйство</span><span style="left:600.20px;top:446.80px;font-size:20px;font-family:'Liberation Serif', serif;font-weight:700;font-style:normal;color:#000000;transform:scaleX(0.9987)">промышленность</span><span style="left:639.19px;top:473.91px;font-size:20px;font-family:'Liberation Serif', serif;font-weight:700;font-style:normal;color:#000000;transform:scaleX(1.0200)">торговля</span><span style="left:845.18px;top:422.60px;font-size:16px;font-family:'Liberation Serif', serif;font-weight:400;font-style:normal;color:#000000;transform:scaleX(1.0494)">ПРИВЕСТИ ПРИМЕРЫ</span><span style="left:1133.36px;top:422.21px;font-size:16px;font-family:'Liberation Serif', serif;font-weight:400;font-style:normal;color:#000000;transform:scaleX(1.0506)">ПРИВЕСТИ ПРИМЕРЫ</span><span style="left:8.77px;top:1022.75px;font-size:12px;font-family:'Liberation Sans', sans-serif;font-weight:400;font-style:normal;color:#333333;transform:scaleX(1.0489)">Страница 1 из 1</span><span style="left:128.76px;top:1022.75px;font-size:12px;font-family:'Liberation Sans', sans-serif;font-weight:400;font-style:normal;color:#333333;transform:scaleX(1.0723)">Число слов: 28</span><span style="left:282.14px;top:1022.75px;font-size:12px;font-family:'Liberation Sans', sans-serif;font-weight:400;font-style:normal;color:#333333;transform:scaleX(1.0690)">английский (США)</span><span style="left:433.92px;top:1022.75px;font-size:12px;font-family:'Liberation Sans', sans-serif;font-weight:400;font-style:normal;color:#333333;transform:scaleX(1.0805)">Специальные возможности: все в порядке</span><span style="left:1873.95px;top:1023.00px;font-size:12px;font-family:'Liberation Sans', sans-serif;font-weight:400;font-style:normal;color:#333333;transform:scaleX(1.0455)">100 %</span></body></html>
